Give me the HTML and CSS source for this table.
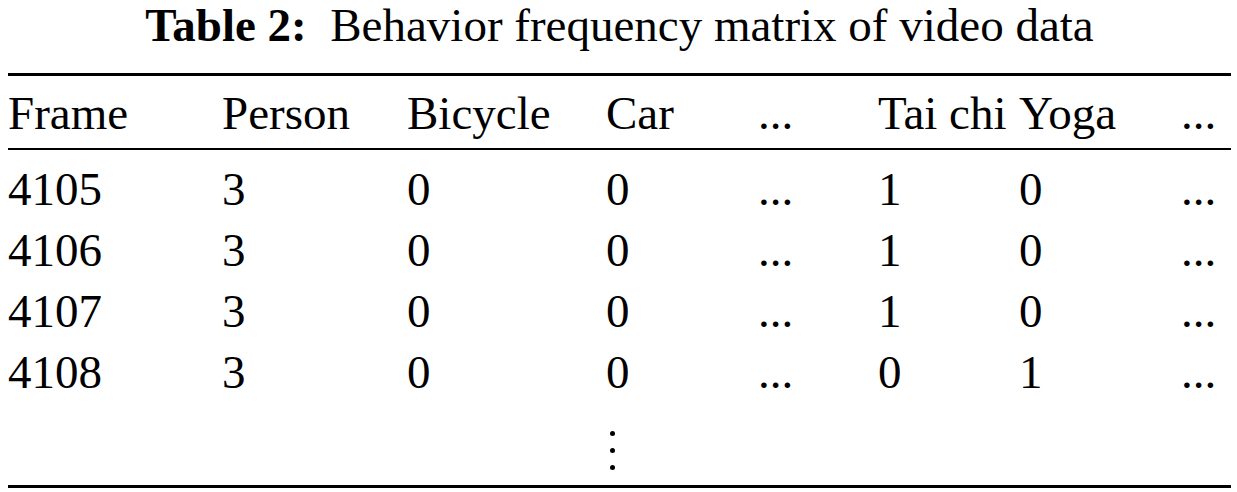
FILE: index.html
```html
<!DOCTYPE html>
<html lang="en">
<head>
<meta charset="utf-8">
<title>Table 2: Behavior frequency matrix of video data</title>
<link rel="stylesheet" href="styles.css">
</head>
<body>
<div class="page">
  <p class="caption"><b class="label">Table 2:</b>&nbsp; Behavior frequency matrix of video data</p>
  <div class="matrix">
    <div class="row head">
      <span>Frame</span><span>Person</span><span>Bicycle</span><span>Car</span><span>...</span><span>Tai chi</span><span>Yoga</span><span>...</span>
    </div>
    <div class="body">
      <div class="row"><span>4105</span><span>3</span><span>0</span><span>0</span><span>...</span><span>1</span><span>0</span><span>...</span></div>
      <div class="row"><span>4106</span><span>3</span><span>0</span><span>0</span><span>...</span><span>1</span><span>0</span><span>...</span></div>
      <div class="row"><span>4107</span><span>3</span><span>0</span><span>0</span><span>...</span><span>1</span><span>0</span><span>...</span></div>
      <div class="row"><span>4108</span><span>3</span><span>0</span><span>0</span><span>...</span><span>0</span><span>1</span><span>...</span></div>
      <div class="row vrow">
        <span></span><span></span><span></span>
        <span class="vdots" aria-label="vertical ellipsis"><i></i><i></i><i></i></span>
      </div>
    </div>
  </div>
</div>
</body>
</html>
```
FILE: styles.css
```css
html, body {
  margin: 0;
  background: #fff;
}

body {
  font-family: "Liberation Serif", "Times New Roman", serif;
  color: #000;
}

.page {
  padding: 0 6px 0 8px;
}

.caption {
  margin: 0;
  font-size: 47px;
  line-height: 50px;
  text-align: center;
  white-space: nowrap;
}

.label {
  font-weight: bold;
}

.matrix {
  margin-top: 23px;
  border-top: 3px solid #000;
  border-bottom: 3px solid #000;
  font-size: 47px;
}

.row {
  display: grid;
  grid-template-columns: 214px 185px 199px 152px 120px 141px 162px 1fr;
  line-height: 61px;
  white-space: nowrap;
}

.head {
  padding: 7px 0 4px;
  border-bottom: 2px solid #000;
}

.body {
  padding-top: 9px;
}

.vrow {
  height: 82px;
}

.vdots {
  display: flex;
  flex-direction: column;
  gap: 12px;
  padding-top: 28px;
  margin-left: 4px;
}

.vdots i {
  display: block;
  width: 5px;
  height: 5px;
  border-radius: 50%;
  background: #000;
}
```
